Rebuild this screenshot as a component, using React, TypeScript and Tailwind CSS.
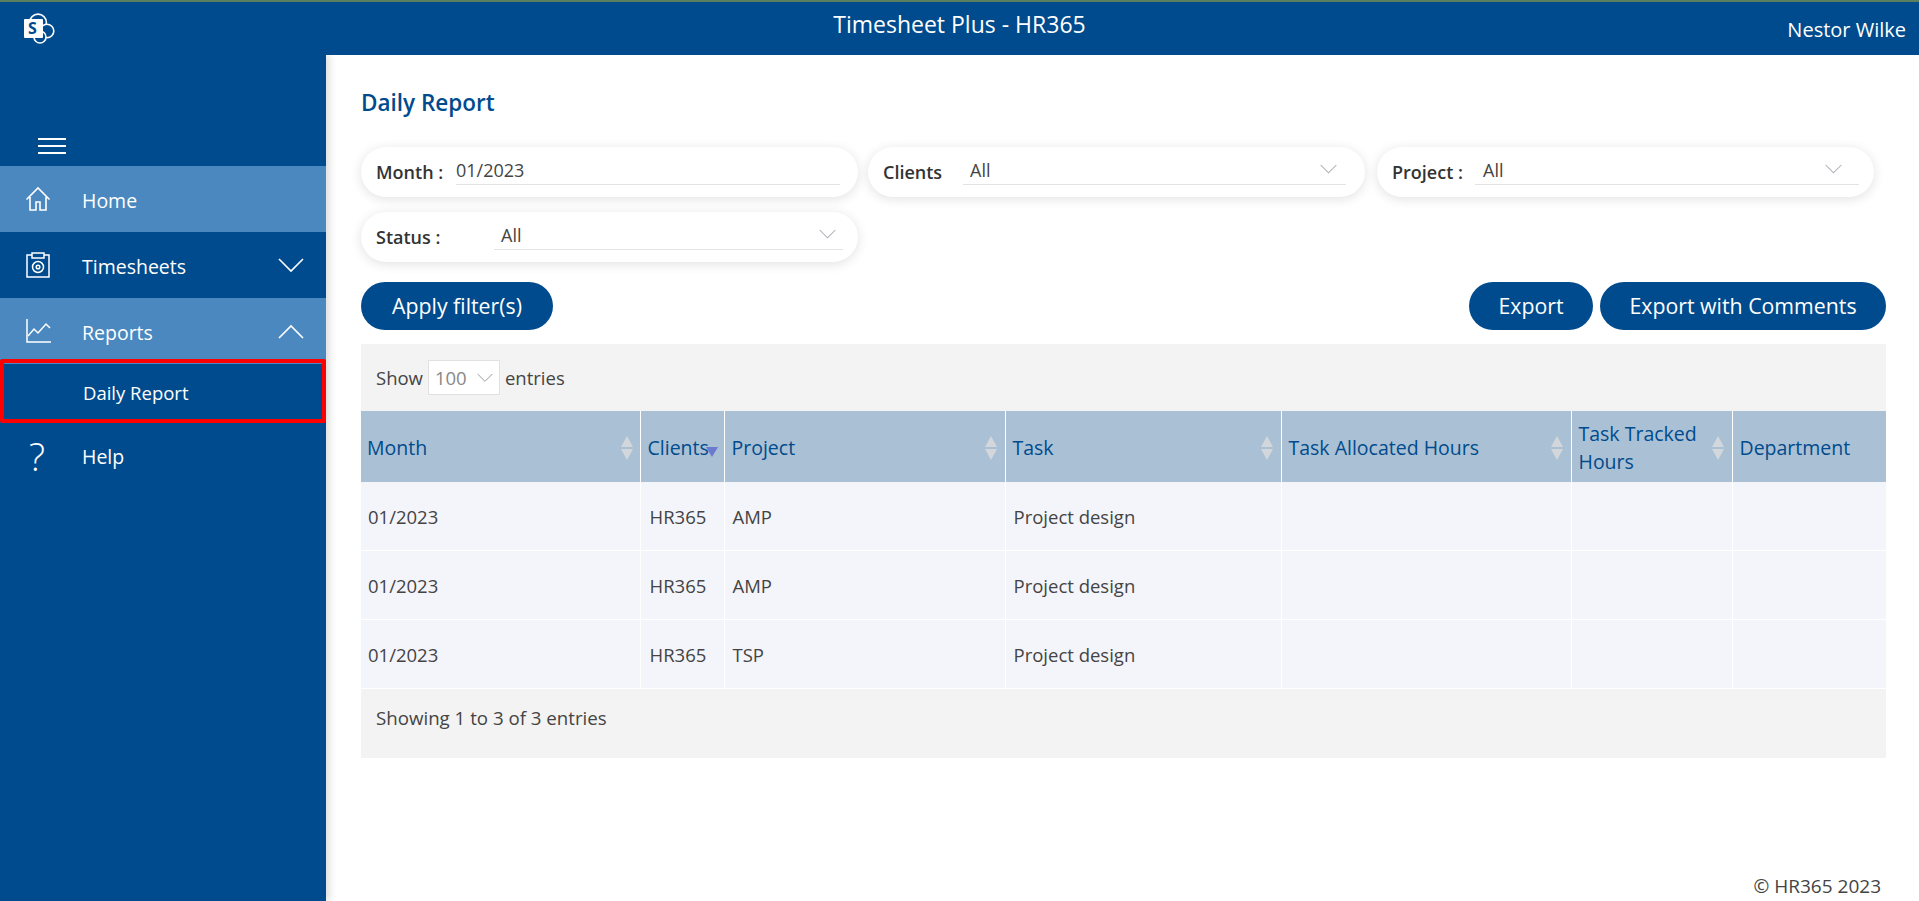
const rows = [
  { month: '01/2023', client: 'HR365', project: 'AMP', task: 'Project design' },
  { month: '01/2023', client: 'HR365', project: 'AMP', task: 'Project design' },
  { month: '01/2023', client: 'HR365', project: 'TSP', task: 'Project design' },
]

const SharePointLogo = () => (
  <div className="relative w-[32px] h-[32px]">
    <svg width="32" height="32" viewBox="0 0 32 32" fill="#004b8d" stroke="white" strokeWidth="1.6">
      <circle cx="15" cy="9.5" r="8.4" />
      <circle cx="24" cy="18" r="6.8" />
      <circle cx="17" cy="24" r="6" />
      <rect x="1" y="6" width="19" height="19" rx="1" fill="white" stroke="none" />
    </svg>
    <span className="absolute left-[5px] top-[5px] text-[16px] leading-[21px] font-bold text-[#004b8d]">S</span>
  </div>
)

const HomeIcon = () => (
  <svg width="26" height="26" viewBox="0 0 26 26" fill="none" stroke="white" strokeWidth="1.6">
    <path d="M1.5 13.5 13 2l11.5 11.5M5 11v13h6v-8h4v8h6V11" />
  </svg>
)

const TimesheetIcon = () => (
  <svg width="26" height="26" viewBox="0 0 26 26" fill="none" stroke="white" strokeWidth="1.5">
    <path d="M7 3H2v22h22V3h-5" />
    <rect x="7" y="1" width="12" height="5" />
    <circle cx="13" cy="15" r="5.5" />
    <circle cx="13" cy="15" r="1.8" />
  </svg>
)

const ChartIcon = () => (
  <svg width="26" height="26" viewBox="0 0 26 26" fill="none" stroke="white" strokeWidth="1.5">
    <path d="M2 1v23h24" />
    <path d="M3 18l6-7 4 4 8-9 4 4" />
  </svg>
)

const SortArrows = () => (
  <svg width="14" height="24" viewBox="0 0 14 24" fill="#d3d7db" className="shrink-0">
    <path d="M7 0l6 11H1zM1 13h12L7 24z" />
  </svg>
)

const Chevron = ({ up, width, color }: { up?: boolean; width: number; color: string }) => (
  <svg width={width} height={width / 2 + 2} viewBox="0 0 26 15" fill="none" stroke={color} strokeWidth="1.6">
    <path d={up ? 'M1 14 13 2l12 12' : 'M1 1l12 12L25 1'} />
  </svg>
)

const NavItem = ({ icon, label, active, chevron, textPad = 'pt-[4px]' }: { icon: React.ReactNode; label: string; active?: boolean; chevron?: 'up' | 'down'; textPad?: string }) => (
  <div className={`flex items-center h-[66px] pl-[25px] pr-[22px] text-[19.5px] text-white ${active ? 'bg-[#4a88bf]' : ''}`}>
    <span className="w-[57px]">{icon}</span>
    <span className={`flex-1 ${textPad}`}>{label}</span>
    {chevron === 'down' && <Chevron width={26} color="white" />}
    {chevron === 'up' && <Chevron up width={26} color="white" />}
  </div>
)

const FilterPill = ({ label, value, labelWidth, padding, inner, select = true }: { label: string; value: string; labelWidth: string; padding: string; inner: string; select?: boolean }) => (
  <div className={`flex items-center h-[50px] w-[497px] rounded-full bg-white shadow-[0_2px_12px_rgba(0,0,0,0.12)] pl-[15px] ${padding}`}>
    <span className={`font-semibold text-[18px] text-[#333] shrink-0 ${labelWidth}`}>{label}</span>
    <div className={`flex-1 flex items-center justify-between border-b border-[#e1e3e6] h-[30px] -mt-[4px] text-[18px] leading-[24px] text-[#444] ${inner}`}>
      <span>{value}</span>
      {select && <Chevron width={17} color="#a9adb2" />}
    </div>
  </div>
)

const PrimaryButton = ({ children, width }: { children: React.ReactNode; width: string }) => (
  <button className={`h-[48px] rounded-full bg-[#004b8d] text-white text-[21.3px] ${width}`}>{children}</button>
)

export default function App() {
  return (
    <div className="h-[901px] overflow-hidden flex flex-col font-['Open_Sans',sans-serif]">
      <header className="h-[55px] shrink-0 bg-[#004b8d] border-t-2 border-[#5a8060] flex items-center justify-between pl-[23px] pr-[13px] relative z-10">
        <SharePointLogo />
        <span className="text-white text-[23px] absolute left-0 right-0 top-[5px] text-center">Timesheet Plus - HR365</span>
        <span className="text-white text-[20px] mt-[3px]">Nestor Wilke</span>
      </header>
      <div className="flex flex-1 min-h-0">
        <aside className="w-[326px] shrink-0 bg-[#004b8d] shadow-[3px_0_8px_rgba(0,0,0,0.15)] flex flex-col pt-[83px]">
          <div className="pl-[38px] h-[28px] flex flex-col gap-[5px]">
            <div className="w-[28px] h-[2px] bg-white" />
            <div className="w-[28px] h-[2px] bg-white" />
            <div className="w-[28px] h-[2px] bg-white" />
          </div>
          <NavItem icon={<HomeIcon />} label="Home" active />
          <NavItem icon={<TimesheetIcon />} label="Timesheets" chevron="down" />
          <NavItem icon={<ChartIcon />} label="Reports" active chevron="up" />
          <div className="h-[64px] -mt-[5px] border-[4px] border-[#ff0000] rounded-[2px] flex items-center pl-[79px] pt-[4px] text-[18.5px] text-white relative">
            Daily Report
          </div>
          <NavItem icon={<span className="block text-[38px] font-light leading-none pl-[4px]">?</span>} label="Help" textPad="pt-[2px]" />
        </aside>
        <main className="flex-1 min-w-0 pl-[35px] pr-[33px] flex flex-col">
          <h1 className="text-[#004b8d] text-[22.5px] font-semibold mt-[31px] h-[33px] leading-[33px]">Daily Report</h1>
          <div className="flex mt-[28px] gap-[10px]">
            <FilterPill label="Month :" value="01/2023" labelWidth="w-[80px]" padding="pr-[18px]" inner="" select={false} />
            <FilterPill label="Clients" value="All" labelWidth="w-[80px]" padding="pr-[19px]" inner="pl-[7px] pr-[9px]" />
            <div className="ml-[2px]">
              <FilterPill label="Project :" value="All" labelWidth="w-[83px]" padding="pr-[15px]" inner="pl-[8px] pr-[17px]" />
            </div>
          </div>
          <div className="flex mt-[15px]">
            <FilterPill label="Status :" value="All" labelWidth="w-[118px]" padding="pr-[15px]" inner="pl-[7px] pr-[7px]" />
          </div>
          <div className="flex items-center justify-between mt-[20px]">
            <PrimaryButton width="w-[192px]">Apply filter(s)</PrimaryButton>
            <div className="flex gap-[7px]">
              <PrimaryButton width="w-[124px]">Export</PrimaryButton>
              <PrimaryButton width="w-[286px]">Export with Comments</PrimaryButton>
            </div>
          </div>
          <div className="mt-[14px] bg-[#f3f3f3]">
            <div className="h-[67px] flex items-center pl-[15px] gap-[5px] text-[18.5px] text-[#444]">
              Show
              <div className="w-[72px] h-[35px] border border-[#e1e1e1] bg-white flex items-center justify-between px-[6px] text-[#888]">
                100
                <Chevron width={16} color="#999" />
              </div>
              entries
            </div>
            <table className="w-full table-fixed border-collapse">
              <colgroup>
                <col className="w-[279px]" />
                <col className="w-[84px]" />
                <col className="w-[281px]" />
                <col className="w-[276px]" />
                <col className="w-[290px]" />
                <col className="w-[161px]" />
                <col />
              </colgroup>
              <thead>
                <tr className="h-[71px] bg-[#aac0d4] text-[#004b8d] text-[19.5px] text-left">
                  <th className="font-normal px-[6px] pt-[2px] border-r border-white">
                    <div className="flex items-center justify-between">Month<SortArrows /></div>
                  </th>
                  <th className="font-normal pl-[7px] pt-[2px] border-r border-white relative">
                    Clients
                    <svg width="14" height="12" viewBox="0 0 14 12" fill="#6c79d0" className="absolute right-[5px] top-[35px]">
                      <path d="M1 1h12L7 11z" />
                    </svg>
                  </th>
                  <th className="font-normal px-[7px] pt-[2px] border-r border-white">
                    <div className="flex items-center justify-between">Project<SortArrows /></div>
                  </th>
                  <th className="font-normal px-[7px] pt-[2px] border-r border-white">
                    <div className="flex items-center justify-between">Task<SortArrows /></div>
                  </th>
                  <th className="font-normal px-[7px] pt-[2px] border-r border-white">
                    <div className="flex items-center justify-between">Task Allocated Hours<SortArrows /></div>
                  </th>
                  <th className="font-normal px-[7px] pt-[2px] border-r border-white leading-[28px]">
                    <div className="flex items-center justify-between">Task Tracked Hours<SortArrows /></div>
                  </th>
                  <th className="font-normal px-[7px] pt-[2px]">Department</th>
                </tr>
              </thead>
              <tbody>
                {rows.map((row, i) => (
                  <tr key={i} className={`bg-[#f4f5fb] text-[#444] text-[18.5px] border-b border-white ${i === 0 ? 'h-[68px]' : 'h-[69px]'}`}>
                    <td className="px-[7px] pt-[2px] border-r border-white">{row.month}</td>
                    <td className="px-[9px] pt-[2px] border-r border-white">{row.client}</td>
                    <td className="px-[8px] pt-[2px] border-r border-white">{row.project}</td>
                    <td className="px-[8px] pt-[2px] border-r border-white">{row.task}</td>
                    <td className="border-r border-white" />
                    <td className="border-r border-white" />
                    <td />
                  </tr>
                ))}
              </tbody>
            </table>
            <div className="h-[69px] pl-[15px] pt-[15px] text-[18.7px] text-[#444]">Showing 1 to 3 of 3 entries</div>
          </div>
          <div className="mt-auto mb-[1px] mr-[5px] text-right text-[19px] text-[#444]">© HR365 2023</div>
        </main>
      </div>
    </div>
  )
}
